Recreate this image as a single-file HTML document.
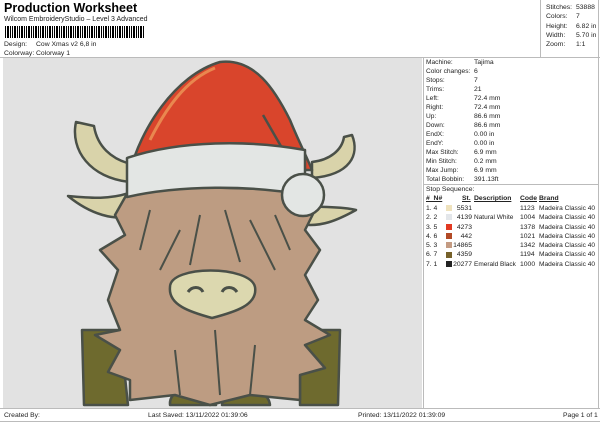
<!DOCTYPE html>
<html><head><style>
*{margin:0;padding:0;box-sizing:border-box}
body{width:600px;height:424px;background:#fff;font-family:"Liberation Sans",sans-serif;color:#222;position:relative;overflow:hidden;font-size:6.8px}
.a{position:absolute;white-space:nowrap}
</style></head><body>
<div class="a" style="left:4px;top:1px;font-size:12.5px;font-weight:bold;color:#000">Production Worksheet</div>
<div class="a" style="left:4px;top:16px;font-size:7px">Wilcom EmbroideryStudio – Level 3 Advanced</div>
<div class="a" style="left:5px;top:26px;width:139px;height:12px;background:repeating-linear-gradient(90deg,#000 0 1px,#fff 1px 2px,#000 2px 4px,#fff 4px 5px,#000 5px 6px,#fff 6px 7px)"></div>
<div class="a" style="left:4px;top:41px">Design:</div><div class="a" style="left:36px;top:41px">Cow Xmas v2 6,8 in</div>
<div class="a" style="left:4px;top:50px">Colorway:</div><div class="a" style="left:36px;top:50px">Colorway 1</div>
<div class="a" style="left:0;top:57px;width:600px;border-top:1px solid #bbb"></div>
<div class="a" style="left:540px;top:0;width:59px;height:57px;border-left:1px solid #bbb;border-right:1px solid #bbb"></div>
<div class="a" style="left:546px;top:3px;line-height:9.3px">Stitches:<br>Colors:<br>Height:<br>Width:<br>Zoom:</div>
<div class="a" style="left:576px;top:3px;line-height:9.3px">53888<br>7<br>6.82 in<br>5.70 in<br>1:1</div>
<div class="a" style="left:3px;top:58px;width:419px;height:350px;background:#e2e2e2"></div>
<div class="a" style="left:423px;top:57px;width:176px;height:351px;border-left:1px solid #bbb;border-right:1px solid #bbb"></div>
<div class="a" style="left:426px;top:58px;line-height:9px;font-size:6.6px">Machine:<br>Color changes:<br>Stops:<br>Trims:<br>Left:<br>Right:<br>Up:<br>Down:<br>EndX:<br>EndY:<br>Max Stitch:<br>Min Stitch:<br>Max Jump:<br>Total Bobbin:</div>
<div class="a" style="left:474px;top:58px;line-height:9px">Tajima<br>6<br>7<br>21<br>72.4 mm<br>72.4 mm<br>86.6 mm<br>86.6 mm<br>0.00 in<br>0.00 in<br>6.9 mm<br>0.2 mm<br>6.9 mm<br>391.13ft</div>
<div class="a" style="left:423px;top:184px;width:176px;border-top:1px solid #bbb"></div>
<div class="a" style="left:426px;top:186px">Stop Sequence:</div>
<div class="a" style="left:426px;top:195px;font-weight:bold;text-decoration:underline">#&nbsp;&nbsp;N#</div>
<div class="a" style="left:462px;top:195px;font-weight:bold;text-decoration:underline">St.</div>
<div class="a" style="left:474px;top:195px;font-weight:bold;text-decoration:underline">Description</div>
<div class="a" style="left:520px;top:195px;font-weight:bold;text-decoration:underline">Code</div>
<div class="a" style="left:539px;top:195px;font-weight:bold;text-decoration:underline">Brand</div>
<div class="a" style="left:426px;top:204px;line-height:9.3px">1. 4<br>2. 2<br>3. 5<br>4. 6<br>5. 3<br>6. 7<br>7. 1</div>
<div class="a" style="left:446px;top:205px;width:6px;height:6px;background:#efe2bd"></div>
<div class="a" style="left:446px;top:214px;width:6px;height:6px;background:#e3e6ea"></div>
<div class="a" style="left:446px;top:224px;width:6px;height:6px;background:#e23a22"></div>
<div class="a" style="left:446px;top:233px;width:6px;height:6px;background:#b24a26"></div>
<div class="a" style="left:446px;top:242px;width:6px;height:6px;background:#c49b82"></div>
<div class="a" style="left:446px;top:252px;width:6px;height:6px;background:#76612a"></div>
<div class="a" style="left:446px;top:261px;width:6px;height:6px;background:#222"></div>
<div class="a" style="left:450px;top:204px;width:22px;line-height:9.3px;text-align:right">5531<br>4139<br>4273<br>442<br>14865<br>4359<br>20277</div>
<div class="a" style="left:474px;top:204px;line-height:9.3px;font-size:6.5px"><br>Natural White<br><br><br><br><br>Emerald Black</div>
<div class="a" style="left:520px;top:204px;line-height:9.3px">1123<br>1004<br>1378<br>1021<br>1342<br>1194<br>1000</div>
<div class="a" style="left:539px;top:204px;line-height:9.3px;font-size:6.6px">Madeira Classic 40<br>Madeira Classic 40<br>Madeira Classic 40<br>Madeira Classic 40<br>Madeira Classic 40<br>Madeira Classic 40<br>Madeira Classic 40</div>
<div class="a" style="left:0;top:408px;width:600px;height:14px;border-top:1px solid #bbb;border-bottom:1px solid #bbb"></div>
<div class="a" style="left:4px;top:412px">Created By:</div>
<div class="a" style="left:148px;top:412px">Last Saved: 13/11/2022 01:39:06</div>
<div class="a" style="left:358px;top:412px">Printed: 13/11/2022 01:39:09</div>
<div class="a" style="left:563px;top:412px">Page 1 of 1</div>
<svg class="a" style="left:0;top:0" width="600" height="424" viewBox="0 0 600 424">
<g stroke="#4a5048" stroke-width="2.5" stroke-linejoin="round">
<path d="M76 122 C70 150 90 178 130 182 L135 165 C110 160 97 145 94 126 Z" fill="#d9d3aa"/>
<path d="M68 196 C90 214 115 222 135 215 L132 192 C110 200 90 198 68 196 Z" fill="#d9d3aa"/>
<path d="M352 135 C360 155 350 175 312 178 L312 162 C330 160 342 150 344 137 Z" fill="#d9d3aa"/>
<path d="M356 210 C338 220 320 228 300 224 L302 205 C320 208 340 206 356 210 Z" fill="#d9d3aa"/>
<path d="M82 330 L120 330 L128 405 L84 405 Z" fill="#6e6a2e"/>
<path d="M300 330 L340 330 L338 405 L300 405 Z" fill="#6e6a2e"/>
<path d="M170 405 C168 385 210 380 216 405 Z" fill="#6e6a2e"/>
<path d="M222 405 C224 382 268 384 270 405 Z" fill="#6e6a2e"/>
<path d="M132 185 L115 215 L125 235 L100 250 L118 270 L108 300 L120 330 L95 335 L120 350 L108 372 L130 380 L130 400 L175 395 L210 405 L250 395 L300 400 L300 375 L325 368 L305 345 L330 335 L305 320 L318 300 L305 275 L320 250 L305 230 L315 210 L298 190 Z" fill="#bd9c82"/>
<path d="M130 172 C140 130 175 75 220 62 C255 58 275 90 290 120 C298 140 306 155 312 170 L130 170 Z" fill="#d9452c"/>
<path d="M150 140 C165 110 185 80 215 68" stroke="#e9874f" stroke-width="3" fill="none"/>
<path d="M263 115 L282 148" fill="none"/>
<path d="M127 158 C180 140 250 140 305 150 L305 195 C250 185 180 185 127 197 Z" fill="#e3e6e4"/>
<circle cx="303" cy="195" r="21" fill="#e3e6e4"/>
<path d="M170 287 C170 265 250 265 255 287 C258 305 235 312 212 318 C190 312 168 305 170 287 Z" fill="#dcd8af"/>
</g>
<g fill="none" stroke="#4a5048" stroke-width="2">
<path d="M180 230 L160 270 M200 215 L190 265 M225 210 L240 262 M250 220 L275 270 M150 210 L140 250 M275 215 L290 250 M175 350 L180 395 M215 330 L220 395 M255 345 L250 395"/>
<path d="M188 292 C192 286 200 286 203 292 M222 292 C225 286 233 286 237 292" stroke-width="3"/>
</g>
</svg>
</body></html>
